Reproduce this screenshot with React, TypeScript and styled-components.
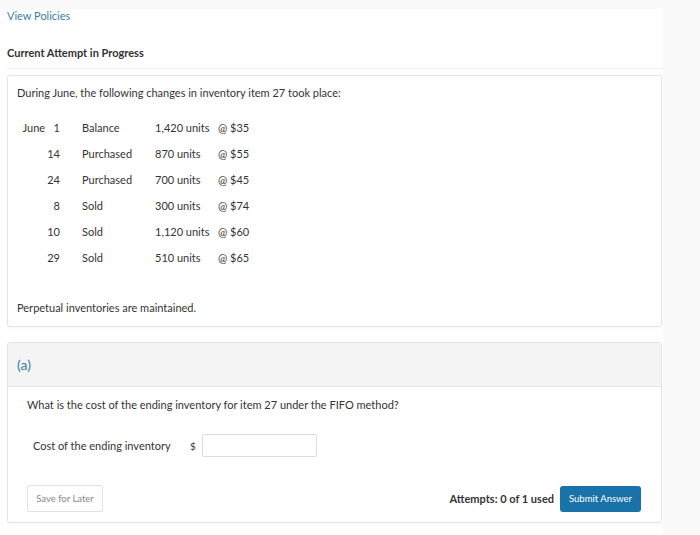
import React from "react";
import styled, { createGlobalStyle } from "styled-components";

const GlobalStyle = createGlobalStyle`
  html, body {
    margin: 0;
    padding: 0;
    background: #f9f9f9;
    font-family: Lato, "Open Sans", Arial, sans-serif;
    color: #333;
  }
  * { box-sizing: border-box; }
`;

const Page = styled.div`
  padding-top: 9px;
`;

const Main = styled.main`
  width: 663px;
  min-height: 526px;
  background: #fff;
  padding: 0 1px 0 7px;
`;

const PolicyLink = styled.a`
  display: block;
  font-size: 11px;
  line-height: 14px;
  color: #3a7ca5;
  text-decoration: none;
`;

const Heading = styled.h2`
  margin: 23px 0 0;
  padding-bottom: 8px;
  font-size: 11px;
  line-height: 14px;
  font-weight: 700;
  color: #333;
  border-bottom: 1px solid #eeeeee;
`;

const Card = styled.section<{ $top: number }>`
  margin-top: ${(p) => p.$top}px;
  border: 1px solid #e4e4e4;
  border-radius: 3px;
  box-shadow: 0 1px 2px rgba(0, 0, 0, 0.04);
  background: #fff;
`;

const CardText = styled.p<{ $top?: number }>`
  margin: ${(p) => p.$top ?? 0}px 0 0;
  font-size: 11px;
  line-height: 14px;
`;

const Problem = styled.div`
  padding: 10px 9px 11px;
`;

const Table = styled.div`
  margin-top: 15px;
  display: grid;
  grid-template-columns: 43px 95px 63px auto;
  font-size: 11px;
`;

const Cell = styled.div<{ $pad?: number }>`
  height: 26px;
  line-height: 26px;
  padding-left: ${(p) => p.$pad ?? 0}px;
  white-space: pre;
`;

const DateCell = styled(Cell)`
  text-align: right;
`;

const PartHeader = styled.div`
  height: 44px;
  padding-left: 9px;
  display: flex;
  align-items: center;
  background: #f4f4f4;
  border-bottom: 1px solid #e6e6e6;
  font-size: 14px;
  color: #3a7ca5;
`;

const PartBody = styled.div`
  padding: 11px 20px 10px 19px;
`;

const AnswerRow = styled.div`
  margin-top: 22px;
  padding-left: 6px;
  display: flex;
  align-items: center;
  font-size: 11px;
`;

const AnswerLabel = styled.span`
  width: 157px;
`;

const Dollar = styled.span`
  width: 12px;
  font-size: 10px;
`;

const AmountInput = styled.input`
  width: 115px;
  height: 23px;
  border: 1px solid #dcdcdc;
  border-radius: 2px;
  outline: none;
`;

const Actions = styled.div`
  margin-top: 28px;
  display: flex;
  align-items: center;
`;

const SaveButton = styled.button`
  width: 76px;
  height: 27px;
  padding: 0;
  border: 1px solid #e2e2e2;
  border-radius: 2px;
  background: #fff;
  color: #888;
  font-family: inherit;
  font-size: 9.5px;
`;

const Attempts = styled.span`
  margin-left: auto;
  margin-right: 6px;
  font-size: 11px;
  font-weight: 700;
  color: #333;
`;

const SubmitButton = styled.button`
  width: 81px;
  height: 26px;
  padding: 0;
  border: none;
  border-radius: 3px;
  background: #1a73a8;
  color: #fff;
  font-family: inherit;
  font-size: 9.5px;
`;

const rows = [
  ["June   1", "Balance", "1,420 units", "@ $35"],
  ["14", "Purchased", "870 units", "@ $55"],
  ["24", "Purchased", "700 units", "@ $45"],
  ["8", "Sold", "300 units", "@ $74"],
  ["10", "Sold", "1,120 units", "@ $60"],
  ["29", "Sold", "510 units", "@ $65"],
];

export default function App() {
  return (
    <>
      <GlobalStyle />
      <Page>
        <Main>
          <PolicyLink href="#">View Policies</PolicyLink>
          <Heading>Current Attempt in Progress</Heading>
          <Card $top={6}>
            <Problem>
              <CardText>During June, the following changes in inventory item 27 took place:</CardText>
              <Table>
                {rows.map((r, i) => (
                  <React.Fragment key={i}>
                    <DateCell>{r[0]}</DateCell>
                    <Cell $pad={22}>{r[1]}</Cell>
                    <Cell>{r[2]}</Cell>
                    <Cell>{r[3]}</Cell>
                  </React.Fragment>
                ))}
              </Table>
              <CardText $top={30}>Perpetual inventories are maintained.</CardText>
            </Problem>
          </Card>
          <Card $top={15}>
            <PartHeader>(a)</PartHeader>
            <PartBody>
              <CardText>What is the cost of the ending inventory for item 27 under the FIFO method?</CardText>
              <AnswerRow>
                <AnswerLabel>Cost of the ending inventory</AnswerLabel>
                <Dollar>$</Dollar>
                <AmountInput type="text" />
              </AnswerRow>
              <Actions>
                <SaveButton>Save for Later</SaveButton>
                <Attempts>Attempts: 0 of 1 used</Attempts>
                <SubmitButton>Submit Answer</SubmitButton>
              </Actions>
            </PartBody>
          </Card>
        </Main>
      </Page>
    </>
  );
}
